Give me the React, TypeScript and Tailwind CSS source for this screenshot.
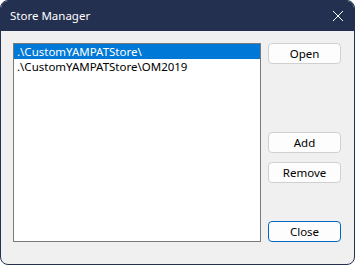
export default function App() {
  const items = ['.\\CustomYAMPATStore\\', '.\\CustomYAMPATStore\\OM2019'];

  return (
    <div
      className="w-[355px] h-[265px] bg-white"
      style={{ fontFamily: '"Noto Sans", "Liberation Sans", sans-serif' }}
    >
      <div className="w-full h-full flex flex-col rounded-[8px] overflow-hidden border border-[#24304f] bg-[#f0f0f0]">
        {/* Title bar */}
        <div className="h-[30px] shrink-0 bg-[#24304f] flex items-center justify-between pl-[9px] pr-[9px]">
          <span className="text-[11.5px] text-white leading-none">Store Manager</span>
          <svg width="12" height="12" viewBox="0 0 12 12" className="mr-[1px]">
            <path d="M1 1 L11 11 M11 1 L1 11" stroke="#ffffff" strokeWidth="1" fill="none" />
          </svg>
        </div>

        {/* Body */}
        <div className="flex-1 flex pl-[12px] pt-[12px] pb-[22px] pr-[13px] gap-[7px]">
          <div className="w-[248px] h-[199px] bg-white border border-[#7a7a7a] flex flex-col">
            {items.map((it, i) => (
              <div
                key={it}
                className={
                  'h-[15px] pl-[3px] text-[11.5px] leading-[15px] whitespace-nowrap overflow-hidden ' +
                  (i === 0 ? 'bg-[#0078d7] text-white' : 'text-black')
                }
              >
                {it}
              </div>
            ))}
          </div>

          <div className="flex-1 flex flex-col">
            <button className="h-[21px] w-[73px] rounded-[4px] border border-[#d0d0d0] bg-[#fdfdfd] text-[11.5px] text-black leading-none">
              Open
            </button>
            <div className="h-[68px]" />
            <button className="h-[21px] w-[73px] rounded-[4px] border border-[#d0d0d0] bg-[#fdfdfd] text-[11.5px] text-black leading-none">
              Add
            </button>
            <div className="h-[9px]" />
            <button className="h-[21px] w-[73px] rounded-[4px] border border-[#d0d0d0] bg-[#fdfdfd] text-[11.5px] text-black leading-none">
              Remove
            </button>
            <div className="flex-1" />
            <button className="h-[21px] w-[73px] rounded-[4px] border border-[#0067c0] bg-[#fdfdfd] text-[11.5px] text-black leading-none">
              Close
            </button>
          </div>
        </div>
      </div>
    </div>
  );
}
